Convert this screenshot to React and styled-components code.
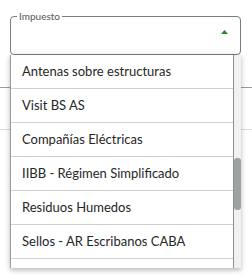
import React from "react";
import styled, { createGlobalStyle } from "styled-components";

const GlobalStyle = createGlobalStyle`
  html, body { margin: 0; padding: 0; background: #ffffff; }
  body { font-family: "Lato", "Open Sans", sans-serif; color: #2b2b2b; }
  * { box-sizing: border-box; }
`;

const Page = styled.div`
  width: 252px;
  height: 279px;
  overflow: hidden;
  padding: 10px 0 0 0;
  position: relative;
`;

const FieldWrap = styled.div`
  position: relative;
  margin: 0 11px 0 10px;
  width: 231px;
  z-index: 2;
`;

const Fieldset = styled.fieldset`
  margin: 0;
  padding: 0 5px;
  border: 1px solid #7b7b7b;
  border-radius: 4px;
  min-width: 0;
`;

const Legend = styled.legend`
  padding: 0 2px;
  margin-left: 1px;
  font-size: 10px;
  line-height: 12px;
  color: #555;
`;

const FieldBody = styled.div`
  height: 32px;
  display: flex;
  justify-content: flex-end;
  align-items: flex-start;
  padding: 8px 7px 0 0;
`;

const Menu = styled.div`
  position: absolute;
  top: 100%;
  left: 0;
  width: 231px;
  height: 213px;
  display: flex;
  background: #fff;
  overflow: hidden;
  box-shadow: 0 3px 4px rgba(0, 0, 0, 0.18), 0 0 7px rgba(0, 0, 0, 0.12);
`;

const Items = styled.ul`
  flex: 1;
  margin: 0;
  padding: 0;
  list-style: none;
  border-left: 1px solid #9a9a9a;
  border-right: 1px solid #8e8e8e;
`;

const Item = styled.li`
  height: 34px;
  border-bottom: 1px solid #cfcfcf;
  display: flex;
  align-items: center;
  padding: 0 0 2px 11px;
  font-size: 13px;
  color: #262626;
  white-space: nowrap;
`;

const Track = styled.div`
  width: 7px;
  background: #f1f1f1;
  display: flex;
  flex-direction: column;
`;

const Thumb = styled.div`
  margin-top: ${(p) => p.$offset}px;
  height: ${(p) => p.$size}px;
  background: #9ea2a2;
  border-radius: 3px;
`;

const Backdrop = styled.div`
  position: relative;
  z-index: 1;
`;

const BgRow = styled.div`
  height: ${(p) => p.$h}px;
  border-bottom: 1px solid ${(p) => p.$line};
`;

const items = [
  "Antenas sobre estructuras",
  "Visit BS AS",
  "Compañías Eléctricas",
  "IIBB - Régimen Simplificado",
  "Residuos Humedos",
  "Sellos - AR Escribanos CABA",
  "",
];

export default function App() {
  return (
    <>
      <GlobalStyle />
      <Page>
        <FieldWrap>
          <Fieldset>
            <Legend>Impuesto</Legend>
            <FieldBody>
              <svg width="7" height="4" viewBox="0 0 7 4">
                <polygon points="0,4 3.5,0 7,4" fill="#22882e" />
              </svg>
            </FieldBody>
          </Fieldset>
          <Menu>
            <Items>
              {items.map((t, i) => (
                <Item key={i}>{t}</Item>
              ))}
            </Items>
            <Track>
              <Thumb $offset={103} $size={52} />
            </Track>
          </Menu>
        </FieldWrap>
        <Backdrop>
          <BgRow $h={33} $line="#9c9c9c" />
          <BgRow $h={42} $line="#dedede" />
        </Backdrop>
      </Page>
    </>
  );
}
